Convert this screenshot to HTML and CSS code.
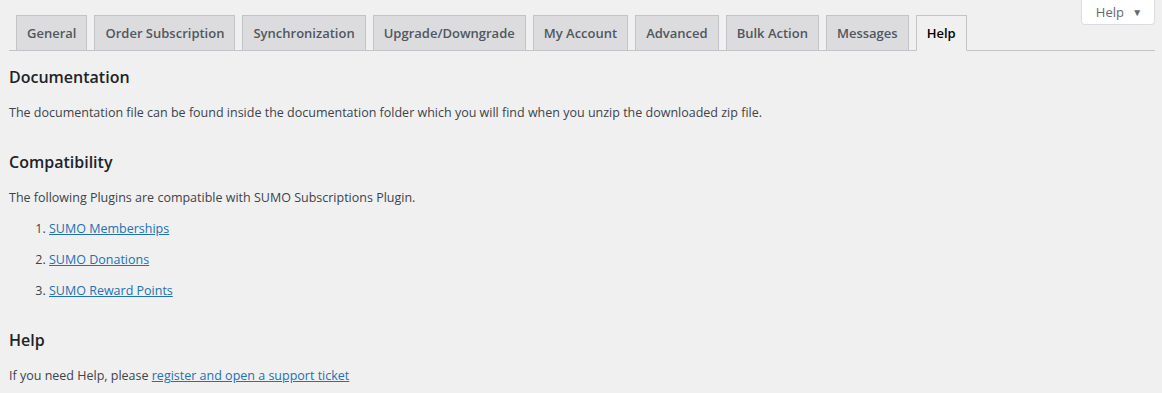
FILE: index.html
```html
<!DOCTYPE html>
<html lang="en">
<head>
    <meta charset="UTF-8">
    <title>SUMO Subscriptions - Help</title>
    <link rel="stylesheet" href="styles.css">
</head>
<body>
    <div class="screen-meta-links">
        <button class="help-toggle">Help <span class="caret">&#9660;</span></button>
    </div>

    <div class="wrap">
        <nav class="nav-tab-wrapper">
            <a class="nav-tab" href="#">General</a>
            <a class="nav-tab" href="#">Order Subscription</a>
            <a class="nav-tab" href="#">Synchronization</a>
            <a class="nav-tab" href="#">Upgrade/Downgrade</a>
            <a class="nav-tab" href="#">My Account</a>
            <a class="nav-tab" href="#">Advanced</a>
            <a class="nav-tab" href="#">Bulk Action</a>
            <a class="nav-tab" href="#">Messages</a>
            <a class="nav-tab nav-tab-active" href="#">Help</a>
        </nav>

        <h2>Documentation</h2>
        <p>The documentation file can be found inside the documentation folder which you will find when you unzip the downloaded zip file.</p>

        <h2 class="section-title">Compatibility</h2>
        <p>The following Plugins are compatible with SUMO Subscriptions Plugin.</p>
        <ol class="plugin-list">
            <li><a href="#">SUMO Memberships</a></li>
            <li><a href="#">SUMO Donations</a></li>
            <li><a href="#">SUMO Reward Points</a></li>
        </ol>

        <h2 class="section-title">Help</h2>
        <p>If you need Help, please <a href="#">register and open a support ticket</a></p>
    </div>
</body>
</html>
```

FILE: styles.css
```css
* {
    margin: 0;
    padding: 0;
    box-sizing: border-box;
}

body {
    background-color: #f0f0f1;
    color: #3c434a;
    font-family: 'Open Sans', 'Noto Sans', sans-serif;
    font-size: 12.5px;
    line-height: 18px;
    position: relative;
    overflow: hidden;
}

a {
    color: #2271b1;
}

.screen-meta-links {
    position: absolute;
    top: 0;
    right: 7px;
}

.help-toggle {
    width: 74px;
    height: 25px;
    background-color: #fff;
    border: 1px solid #dcdcde;
    border-top: none;
    border-radius: 0 0 4px 4px;
    color: #646970;
    font-family: inherit;
    font-size: 13px;
    padding-left: 2px;
}

.caret {
    font-size: 10px;
    margin-left: 5px;
    vertical-align: 1px;
}

.wrap {
    margin: 0 7px 0 9px;
}

.nav-tab-wrapper {
    display: flex;
    padding-top: 15px;
    border-bottom: 1px solid #c3c4c7;
}

.nav-tab {
    margin-left: 7px;
    padding: 5px 10px;
    border: 1px solid #c3c4c7;
    border-bottom: none;
    background-color: #dcdcde;
    color: #50575e;
    font-size: 13px;
    font-weight: 600;
    line-height: 24px;
    text-decoration: none;
}

.nav-tab-active {
    background-color: #f0f0f1;
    color: #000;
    border-bottom: 1px solid #f0f0f1;
    margin-bottom: -1px;
}

h2 {
    color: #1d2327;
    font-size: 16px;
    font-weight: 600;
    line-height: 24px;
    margin: 14px 0 15px;
}

.section-title {
    margin-top: 28px;
}

.plugin-list {
    margin: 13px 0 0 40px;
}

.plugin-list li {
    margin-bottom: 13px;
}
```
